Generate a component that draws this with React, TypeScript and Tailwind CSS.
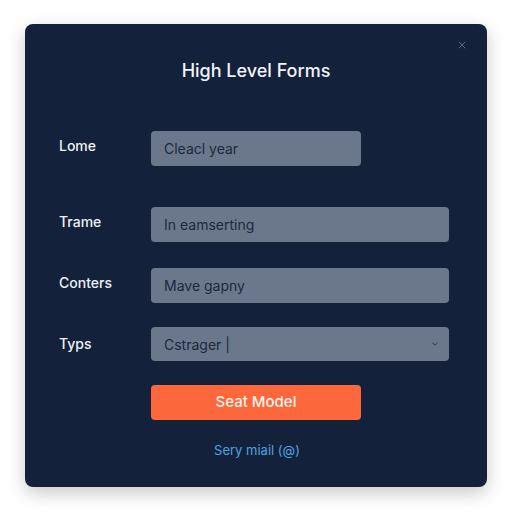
import { ChevronDown, X } from 'lucide-react';

const fields = [
  { label: 'Lome', value: 'Cleacl year', narrow: true, mt: 'mt-[46px]' },
  { label: 'Trame', value: 'In eamserting', narrow: false, mt: 'mt-[41px]' },
  { label: 'Conters', value: 'Mave gapny', narrow: false, mt: 'mt-[26px]' },
];

const App = () => {
  return (
    <div className="min-h-[512px] bg-white pl-[25px] pt-[24px] font-['Inter','Noto_Sans',sans-serif]">
      <div className="relative flex h-[463px] w-[462px] flex-col rounded-lg bg-[#13213b] pl-[34px] pr-[38px] pt-[33px] shadow-[0_6px_18px_rgba(0,0,0,0.22)]">
        <button className="absolute right-[19px] top-[15px] text-[#7283a0]">
          <X className="h-[12px] w-[12px]" strokeWidth={1.5} />
        </button>

        <h1 className="ml-[4px] text-center text-[18px] font-medium leading-[28px] text-[#f1f4f8]">High Level Forms</h1>

        {fields.map((f) => (
          <div key={f.label} className={`flex items-center ${f.mt}`}>
            <label className="-mt-[7px] w-[92px] text-[14px] font-medium text-[#eef1f5]">{f.label}</label>
            <div
              className={`flex h-[35px] items-center rounded-[4px] bg-[#6b788b] px-[13px] text-[14px] text-[#1c2840] ${
                f.narrow ? 'w-[210px]' : 'w-[298px]'
              }`}
            >
              {f.value}
            </div>
          </div>
        ))}

        <div className="mt-[24px] flex items-center">
          <label className="-mt-[2px] w-[92px] text-[14px] font-medium text-[#eef1f5]">Typs</label>
          <div className="flex h-[34px] w-[298px] items-center justify-between rounded-[4px] bg-[#6b788b] pl-[13px] pr-[9px] text-[14px] text-[#1c2840]">
            <span>Cstrager |</span>
            <ChevronDown className="h-[10px] w-[10px] text-[#1c2840]" strokeWidth={2} />
          </div>
        </div>

        <div className="ml-[92px] mt-[24px]">
          <button className="h-[35px] w-[210px] rounded-[4px] bg-[#fc683c] text-[15px] font-medium text-[#fff4ee]">
            Seat Model
          </button>
        </div>

        <div className="ml-[92px] mt-[21px] w-[212px] text-center text-[13px] text-[#4ea4e2]">
          Sery miail (@)
        </div>
      </div>
    </div>
  );
};

export default App;
